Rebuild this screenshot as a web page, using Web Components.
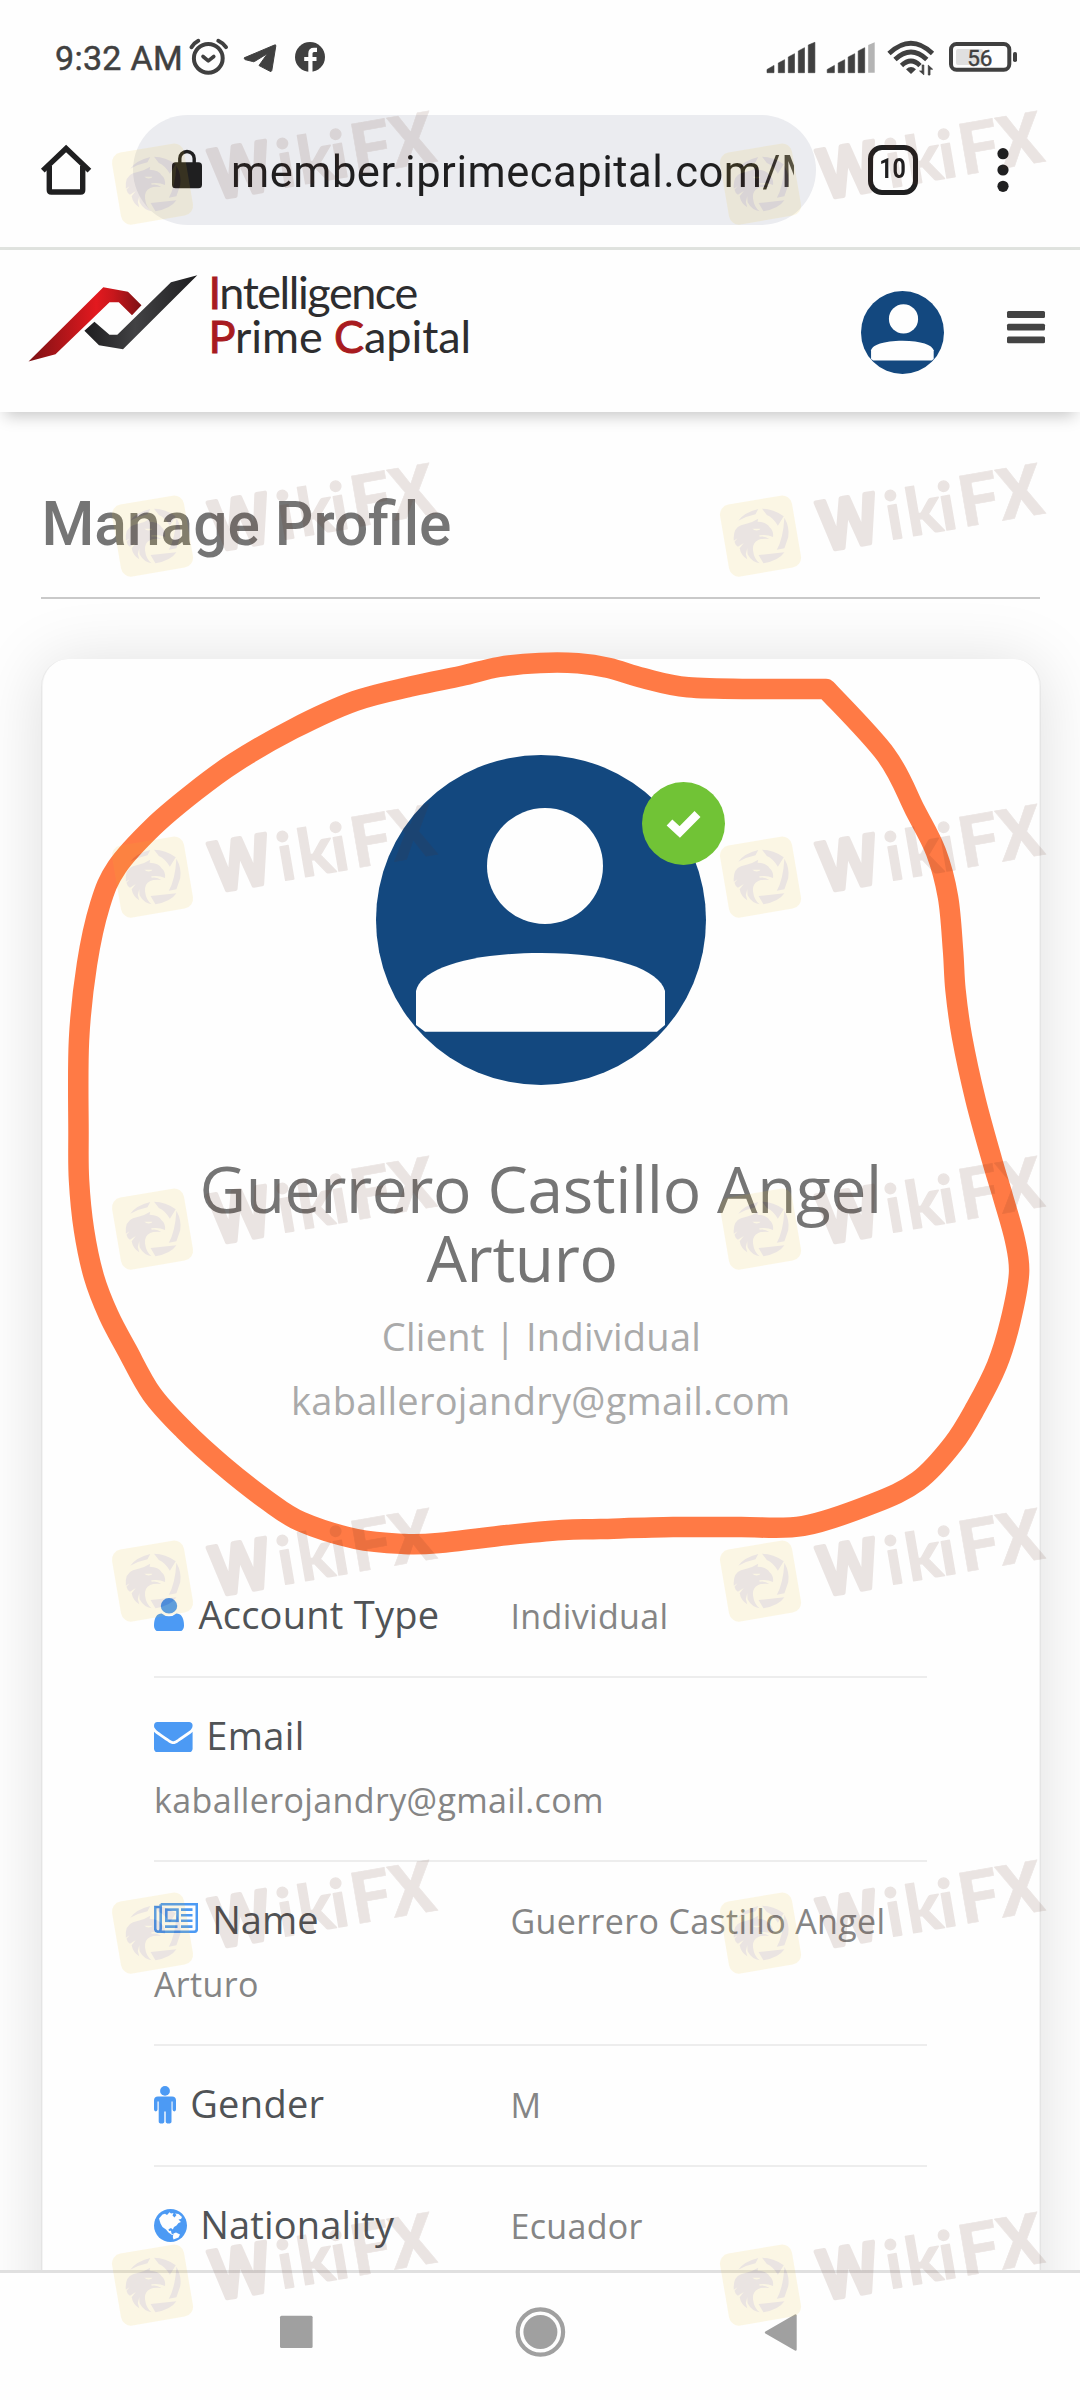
<!DOCTYPE html>
<html lang="en">
<head>
<meta charset="utf-8">
<title>Manage Profile</title>
<style>
  html, body { margin: 0; background: #fefefe; }
  body { width: 1080px; height: 2400px; overflow: hidden; font-family: "Open Sans", sans-serif; }
</style>
</head>
<body>
<profile-app></profile-app>
<script>
const make = (name, html, after) => customElements.define(name, class extends HTMLElement {
  constructor() { super(); this.attachShadow({ mode: 'open' }).innerHTML = typeof html === 'function' ? '' : html; }
  connectedCallback() {
    if (typeof html === 'function') this.shadowRoot.innerHTML = html(this);
    if (after) after(this);
  }
});

/* One line of text whose inked width equals the "w" attribute.
   With mode="size" the font size is adjusted, otherwise the letter spacing. */
const ctx = document.createElement('canvas').getContext('2d');
make('fit-text', '<style>:host{display:block;white-space:pre;flex:none;text-align:left}</style><slot></slot>', el => {
  const w = +el.getAttribute('w'), text = el.textContent, cs = getComputedStyle(el);
  const measure = size => {
    ctx.font = `${cs.fontWeight} ${size}px ${cs.fontFamily}`;
    const m = ctx.measureText(text);
    return { left: m.actualBoundingBoxLeft, ink: m.actualBoundingBoxLeft + m.actualBoundingBoxRight };
  };
  let size = parseFloat(cs.fontSize), m = measure(size);
  if (el.getAttribute('mode') === 'size') {
    size *= w / m.ink; m = measure(size); el.style.fontSize = size + 'px';
  } else if (text.length > 1) el.style.letterSpacing = (w - m.ink) / (text.length - 1) + 'px';
  el.style.width = w + 'px';
  el.style.textIndent = m.left + 'px';
});

make('status-bar', `<style>
  :host{display:flex;height:115px;align-items:center;color:#404040;font-family:Roboto,sans-serif}
  fit-text{margin-left:56px;font-size:34px;line-height:40px;padding-top:1px;-webkit-text-stroke:.5px #404040}
  svg{display:block;flex:none} .gap{flex:1}
</style>
<fit-text w="124">9:32 AM</fit-text>
<svg width="146" height="115" viewBox="180 0 146 115" fill="none" stroke="#404040" stroke-linecap="round" stroke-linejoin="round">
  <circle cx="208.3" cy="58.3" r="14.4" stroke-width="4"/>
  <path d="M191.5 47.2Q194 43 198.3 40.8M218.3 40.8Q223 43 226 47.2" stroke-width="4"/>
  <path d="M203 56.5L208.3 60.8L213.8 56.5" stroke-width="3.6"/>
  <path d="M244.8 57.6L274.5 45Q276 44.3 275.8 46L271.8 70.5Q271.3 72.4 269.5 71L259 65.5L267.5 53.5L254.5 61.5Q253.5 62 252.3 61.4L245 59.6Q243.6 58.6 244.8 57.6Z" fill="#404040" stroke-width="1"/>
  <circle cx="310" cy="57" r="15" fill="#404040" stroke="none"/>
  <path d="M310.4 73V53.5Q310.4 49.8 314 49.8H317M304.2 59H316.5" stroke="#fefefe" stroke-width="4.2" stroke-linecap="butt"/>
</svg>
<span class="gap"></span>
<svg width="320" height="115" viewBox="760 0 320 115" fill="#404040">
  <path d="M767 72.7V69.5L774 65.4V72.7ZM778.3 72.7V63L784.6 59.7V72.7ZM788.3 72.7V57L794.5 53.7V72.7ZM798.3 72.7V51L804.5 47.7V72.7ZM808.3 72.7V45L814.9 42.3V72.7Z" stroke="#404040" stroke-width=".6" stroke-linejoin="round"/>
  <path d="M827.2 72.7V69.5L834.4 65.4V72.7ZM838.2 72.7V63L844.7 59.7V72.7ZM848.2 72.7V57L854.7 53.7V72.7ZM858.2 72.7V51L864.7 47.7V72.7Z" stroke="#404040" stroke-width=".6" stroke-linejoin="round"/>
  <path d="M868.2 72.7V45L874.7 42.3V72.7Z" fill="#b4b4b4"/>
  <g fill="none" stroke="#404040" stroke-width="4.8">
    <path d="M889 53.4Q911 33 932.5 53.4"/><path d="M895 59.5Q911 44.5 926.8 59.5"/><path d="M901.5 65.6Q911 56.5 920 65.6"/>
  </g>
  <path d="M906 69.2Q911 64.6 916 69.2L911 74Z"/>
  <path d="M923.8 65V74.8L919.6 71H922.2V65ZM928.3 75V65.2L932.6 69.2H930V75Z" stroke="#404040" stroke-width=".8"/>
  <rect x="956" y="49" width="27" height="16" rx="2" fill="#e0e0e0"/>
  <rect x="951" y="44" width="58.3" height="25.8" rx="5.5" fill="none" stroke="#404040" stroke-width="4"/>
  <rect x="1013" y="52" width="4" height="10" rx="1.8"/>
  <text x="979.8" y="66" font-size="22.5" text-anchor="middle" textLength="25" font-family="Roboto,sans-serif" stroke="#404040" stroke-width=".4">56</text>
</svg>`);

make('browser-bar', `<style>
  :host{display:flex;height:132px;border-bottom:3px solid #e0e3df;font-family:Roboto,sans-serif;color:#1f1f20}
  svg{display:block;flex:none}
  .pill{width:683px;height:110px;border-radius:55px;background:#ebecf0;display:flex}
  .url{width:561px;overflow:hidden;margin-left:31px;-webkit-mask:linear-gradient(90deg,#000 94%,rgba(0,0,0,.8))}
  .url fit-text{font-size:43.5px;line-height:113px;padding-top:1px}
  .tabs{box-sizing:border-box;width:50px;height:50px;margin:30px 0 0 52px;border:5.5px solid #1f1f20;border-radius:14px;display:flex;justify-content:center}
  .tabs fit-text{font-size:27px;font-weight:700;line-height:39px;transform:scaleX(.86)}
</style>
<svg width="133" height="110" viewBox="0 115 133 110" fill="none" stroke="#1f1f20" stroke-width="5.4" stroke-linejoin="round">
  <path d="M49.3 166V190Q49.3 192 51.3 192H80.7Q82.7 192 82.7 190V166"/><path d="M42.8 170.6L66.1 148.5L89.4 170.6" stroke-linejoin="miter"/></svg>
<div class="pill">
  <svg width="69" height="110" viewBox="133 115 69 110"><rect x="172" y="162.3" width="30" height="26" rx="3.6" fill="#1f1f20"/><path d="M179.8 164V158.5A7.2 7 0 0 1 194.2 158.5V164" fill="none" stroke="#1f1f20" stroke-width="3.4"/></svg>
  <div class="url"><fit-text w="583">member.iprimecapital.com/M</fit-text></div>
</div>
<div class="tabs"><fit-text w="28.5">10</fit-text></div>
<svg width="60" height="110" viewBox="973 115 60 110" style="margin-left:55px" fill="#1f1f20"><circle cx="1003" cy="153.7" r="5.6"/><circle cx="1003" cy="170" r="5.6"/><circle cx="1003" cy="186.3" r="5.6"/></svg>`);

make('user-avatar', `<style>:host{display:block;flex:none}svg{display:block;width:100%;height:100%}</style>
<svg viewBox="0 0 330 330"><circle cx="165" cy="165" r="165" fill="#13487f"/>
<circle cx="111" cy="111" r="58" transform="translate(58)" fill="#fefefe"/>
<path d="M40 236C44 215 90 198 165 198S283 215 289 236V270L281 276.7H49L40 270Z" fill="#fefefe"/></svg>`);

make('site-header', `<style>
  :host{display:flex;height:162px;background:#fefefe;position:relative;z-index:1;box-shadow:0 9px 15px -5px rgba(0,0,0,.22)}
  svg{display:block;flex:none}
  .brand{margin:20px 0 0 7.500px;font:400 45px/44px Lato,sans-serif;color:#2d2d2f;flex:1}
  b{font-weight:inherit;color:#a81b20;-webkit-text-stroke:1px #a81b20}
  user-avatar{width:83px;height:83px;margin-top:41px}
</style>
<svg width="205" height="162" viewBox="0 250 205 162">
  <defs><linearGradient id="r"><stop offset="0" stop-color="#7c1114"/><stop offset=".6" stop-color="#e3191f"/><stop offset=".75" stop-color="#c8171c"/><stop offset="1" stop-color="#7c1114"/></linearGradient>
  <linearGradient id="k"><stop offset="0" stop-color="#1d1d1f"/><stop offset=".45" stop-color="#424244"/><stop offset="1" stop-color="#1d1d1f"/></linearGradient></defs>
  <path fill="url(#r)" d="M28.500 361.500L55.5 354.3L109.5 302.3H118.8L132 315.3L141.5 305.3L128 291.7L103.3 287.3Z"/>
  <path fill="url(#k)" d="M197.3 275.3L171 282.3L117.3 334.7H109.5L94.4 321.7L84.4 330.7L99 345.3L123 349.3Z"/>
</svg>
<div class="brand"><fit-text w="205"><b>I</b>ntelligence</fit-text><fit-text w="256"><b>P</b>rime <b>C</b>apital</fit-text></div>
<user-avatar></user-avatar>
<svg width="136" height="162" viewBox="944 250 136 162" fill="#434343"><rect x="1007" y="311" width="38" height="7" rx="1.5"/><rect x="1007" y="323.8" width="38" height="6.6" rx="1.5"/><rect x="1007" y="336.6" width="38" height="6.6" rx="1.5"/></svg>`);

const icons = {
  user: ['30', '15.8', '33.7', '256 128 1280 1536', '<path d="M1536 1399q0 109-62.500 187t-150.500 78h-854q-88 0-150.500-78t-62.500-187q0-85 8.500-160.500t31.500-152 58.500-131 94-89 134.500-34.500q131 128 313 128t313-128q76 0 134.500 34.500t94 89 58.500 131 31.500 152 8.500 160.500zm-290-907q0 145-102.500 245t-247.500 100-247.500-100-102.500-245 102.500-254.500 247.500-109.500 247.500 109.500 102.500 254.500z"/>'],
  mail: ['38.6', '19.2', '30.3', '0 256 1792 1408', '<path d="M1792 710v794q0 66-47 113t-113 47h-1472q-66 0-113-47t-47-113v-794q44 49 101 87 362 246 497 345 57 42 92.500 65.500t94.500 48 110 24.500h2q51 0 110-24.500t94.500-48 92.500-65.500q170-123 498-345 57-39 100-87zm0-294q0 79-49 151t-122 123q-376 261-468 325-10 7-42.500 31t-54 38.500-52 32.500-57.500 27-50 9h-2q-23 0-50-9t-57.500-27-52-32.500-54-38.500-42.500-31q-91-64-262-182.500t-205-142.500q-62-42-117-115.500t-55-136.500q0-78 41.500-130t118.500-52h1472q65 0 112.500 47t47.500 113z"/>'],
  news: ['44', '16.5', '30', '0 0 44 30', '<g fill="none" stroke="#4c9af4" stroke-width="2.600"><path d="M6.700 1.200H42.800V26Q42.800 28.800 40 28.800H4.500Q1.200 28.800 1.200 25.500V4H6.700M6.700 1.200V25.500Q6.700 28.500 4.500 28.800"/><rect x="12.300" y="6.600" width="11.200" height="11.200"/><path d="M27 6.600H38.500M27 12.200H38.500M27 17.800H38.500M11 23.600H23.500M27 23.600H38.500"/></g>'],
  male: ['22', '15.2', '37.6', '0 0 22 37.6', '<circle cx="11" cy="4.900" r="4.900"/><path d="M4 10.400H18Q22 10.400 22 14.500V23.600Q22 25.400 20.300 25.400T18.600 23.600V15.500H17.500V35.500Q17.500 37.600 14.600 37.600T11.700 35.500V25.400H10.300V35.500Q10.300 37.600 7.500 37.600T4.700 35.500V15.500H3.500V23.600Q3.500 25.400 1.800 25.400T0 23.600V14.500Q0 10.400 4 10.400Z"/>'],
  globe: ['33', '17.2', '33', '0 0 33 33', '<circle cx="16.500" cy="16.500" r="16.500"/><path fill="#fefefe" d="M5 9.500L8.500 5.500L11 4.800L13 6L15.500 3.200L17 4.500L19.500 4L18.500 6.500L20.500 8.500L22.500 6L21 4.500L24.500 5L28 8L27 10L24.500 10.500L27 13L24.500 14L22.500 16.500L20 18L18.800 20.500L17 19L14.500 20.200L15 22L17 21.800L17.500 24.500L19.500 25.500L18 26L14.500 23.500L12 20.500L8.500 18L6.500 14.500Z"/><path fill="#fefefe" d="M19.500 24.500L22 23.500L26 25.500L24.500 28.500L19.500 30.500L18.800 28Z"/>']
};

make('info-row', el => {
  const a = n => el.getAttribute(n), i = icons[a('icon')];
  return `<style>
  :host{display:flex;flex-wrap:wrap;box-sizing:border-box;padding:25.5px 0 30.5px;border-bottom:2px solid #ededed}
  .label{display:flex;width:calc(var(--col,359.5) * 1px);height:63px}
  .label svg{display:block;flex:none;margin-top:${i[1] - 1}px}
  .label fit-text{font-size:38px;line-height:63px;color:#505356;margin-left:${a('gap')}px}
</style>
<div class="label"><svg width="${i[0]}" height="${i[2]}" viewBox="${i[3]}" preserveAspectRatio="none" fill="#4c9af4">${i[4]}</svg><fit-text w="${a('lw')}">${a('label')}</fit-text></div><slot></slot>`;
});

make('user-summary', `<style>
  :host{display:flex;flex-direction:column;align-items:center}
  .pic{position:relative;width:330px;height:330px}
  user-avatar{width:330px;height:330px}
  .badge{position:absolute;left:266px;top:27px;width:83px;height:83px}
  h2{margin:69px 2px 0 0;width:675px;font-weight:400;font-size:64px;line-height:69px;color:#757575}
  .sub{margin-top:11.6px;display:flex;flex-direction:column;align-items:center;font-size:38px;line-height:64.4px;color:#aaa}
</style>
<div class="pic"><user-avatar></user-avatar>
<svg class="badge" viewBox="642 782 83 83"><circle cx="683.5" cy="823.5" r="41.5" fill="#71c336"/><path d="M669.500 822.500L679.800 832L697.500 814" fill="none" stroke="#fff" stroke-width="8.4" stroke-linejoin="miter"/></svg></div>
<h2><fit-text w="674.5">Guerrero Castillo Angel</fit-text><fit-text w="188" style="margin-left:224px">Arturo</fit-text></h2>
<div class="sub"><fit-text w="314.500">Client | Individual</fit-text><fit-text w="494">kaballerojandry@gmail.com</fit-text></div>`);

make('profile-card', `<style>
  :host{display:block;box-sizing:border-box;width:1000px;height:1700px;margin:60px 0 0 41px;padding-top:96px;background:#fefefe;background-clip:padding-box;border:solid rgba(0,0,0,.04);border-width:0 2px;border-radius:27px;box-shadow:0 4px 66px rgba(0,0,0,.13)}
  .rows{width:773px;margin:125px 0 0 111px}
</style><slot name="summary"></slot><div class="rows"><slot></slot></div>`);

make('nav-bar', `<style>:host{display:flex;height:127px;border-top:3px solid #e0e0e0;background:#fefefe;position:relative}svg{display:block}</style>
<svg width="1080" height="127" viewBox="0 2273 1080 127" fill="#a0a0a0"><rect x="280" y="2315.700" width="32.600" height="32.300" rx="1.500"/><circle cx="540.400" cy="2332" r="22.700" fill="none" stroke="#a0a0a0" stroke-width="4.200"/><circle cx="540.400" cy="2332" r="17"/><path d="M766 2332.500L795.500 2315.500V2349.500Z" stroke="#a0a0a0" stroke-width="2.400" stroke-linejoin="round"/></svg>`);

/* Freehand loop drawn over the page: a smooth curve through its points. */
make('marker-loop', '<style>:host{position:absolute;left:0;top:0;width:1080px;height:2400px;pointer-events:none;z-index:2}</style><svg width="1080" height="2400" fill="none" stroke="#ff7a45" stroke-width="20.5" stroke-linejoin="round"><path/></svg>', el => {
  const p = [[826,689],[886,755],[915,810],[936,852],[948,897],[953,950],[955.5,990],[962,1037],[975.6,1100],[992,1160],[1003,1197],[1015,1240],[1019,1274],[1010,1323],[997,1365],[976,1407],[953,1444],[918,1481],[872,1504],[803,1526],[740,1527],[673,1527],[600,1529],[563,1530],[507.6,1535],[439,1543],[404,1544],[356,1539],[301,1521.7],[266.600,1500],[223.400,1466],[184,1430],[151.700,1394],[127,1350],[108.600,1315],[94,1277],[84,1230],[79,1180],[78.500,1132],[79,1040],[87,964],[100,905],[117,867],[153,827],[193,793],[234,763],[293,729],[355,701],[413,686],[461,676],[499,667],[540,663],[578,663.300],[609,668],[643,678],[688,687.300],[760,689],[826,689]];
  let d = `M${p[0]}`;
  for (let i = 0; i < p.length - 1; i++) {
    const a = p[i - 1] || p[i], b = p[i], c = p[i + 1], e = p[i + 2] || c;
    d += `C${b[0] + (c[0] - a[0]) / 6} ${b[1] + (c[1] - a[1]) / 6} ${c[0] - (e[0] - b[0]) / 6} ${c[1] - (e[1] - b[1]) / 6} ${c[0]} ${c[1]}`;
  }
  el.shadowRoot.querySelector('path').setAttribute('d', d + 'Z');
});

make('brand-stamp', `<style>:host{position:absolute;width:340px;height:130px;opacity:.118;z-index:3;pointer-events:none}svg{overflow:visible;display:block}</style>
<svg width="340" height="130" viewBox="-40 -77 340 130">
<g transform="rotate(-9.7)">
  <rect x="-37" y="-36.500" width="73" height="73" rx="10" fill="#eac02c"/>
  <g font-family="Lato,sans-serif" font-weight="700" fill="#5d2b1a" stroke="#5d2b1a" stroke-linejoin="round">
    <text x="58 126 146.500 180 201 240" y="25.500"><tspan font-family="Roboto,sans-serif" font-weight="500" font-size="69" stroke-width="4.500">W</tspan><tspan font-size="66" stroke-width="1.500">iki</tspan><tspan font-family="Roboto,sans-serif" font-size="72" stroke-width=".6">FX</tspan></text>
  </g>
</g>
<g transform="scale(.3444 .3333) translate(-638 -771)" fill="#5d2b1a">
  <path d="M572 725Q590 700 630 690L622 706Q595 712 572 725Z"/>
  <path d="M641 689Q675 689 704 712L687 740Q672 715 655 708Z"/>
  <path d="M706 716Q722 745 717 775L706 808L684 812Q702 780 706 716Z"/>
  <path d="M631 828L706 820Q690 845 645 853Z"/>
  <path d="M559 785Q556 748 580 739Q600 733 612 729L630 719L628 728Q655 729 663 745Q675 755 673 774Q655 765 633 769L634 773Q650 770 662 780Q640 778 630 783Q612 792 615 815Q618 840 634 853Q612 850 599 826L598 808L594 825L598 841Q580 830 576 808L588 792L571 803Q563 798 561 788L570 778ZM613 749Q622 758 634 752L636 749Q622 750 613 749Z" fill-rule="evenodd"/>
</g></svg>`);

make('profile-app', `<style>
  :host{display:flex;flex-direction:column;width:1080px;height:2400px;position:relative;overflow:hidden;background:#fefefe}
  main{height:1858px;overflow:hidden}
  h1{margin:76px 0 0 45.500px;font:500 62px/74px Roboto,sans-serif;color:#757575}
  hr{border:0;height:2px;background:#c9c9c9;margin:35px 40px 0 41px}
  .v{font-size:34px;line-height:60px;padding-top:3px;color:#858585}
</style>
<status-bar></status-bar>
<browser-bar></browser-bar>
<site-header></site-header>
<main>
  <h1><fit-text w="405" mode="size">Manage Profile</fit-text></h1>
  <hr>
  <profile-card>
    <user-summary slot="summary"></user-summary>
    <info-row icon="user" label="Account Type" gap="14.4" lw="239.4"><fit-text class="v" w="152">Individual</fit-text></info-row>
    <info-row icon="mail" label="Email" gap="16.6" lw="92.500" style="--col:773"><fit-text class="v" w="445" style="margin-left:2px">kaballerojandry@gmail.com</fit-text></info-row>
    <info-row icon="news" label="Name" gap="17.2" lw="102" style="--col:358.500"><fit-text class="v" w="370">Guerrero Castillo Angel</fit-text><fit-text class="v" w="103">Arturo</fit-text></info-row>
    <info-row icon="male" label="Gender" gap="16.2" lw="131.400"><fit-text class="v" w="25.500">M</fit-text></info-row>
    <info-row icon="globe" label="Nationality" gap="16.2" lw="191.700"><fit-text class="v" w="129">Ecuador</fit-text></info-row>
  </profile-card>
</main>
<nav-bar></nav-bar>
<marker-loop></marker-loop>
`, el => {
  for (const cy of [183.500, 535.500, 876.5, 1228.500, 1580.5, 1932.5, 2284.500])
    for (const cx of [152.5, 760.5]) {
      const s = document.createElement('brand-stamp');
      s.style.cssText = `left:${cx - 40}px;top:${cy - 77}px`;
      el.shadowRoot.append(s);
    }
});
</script>
</body>
</html>
